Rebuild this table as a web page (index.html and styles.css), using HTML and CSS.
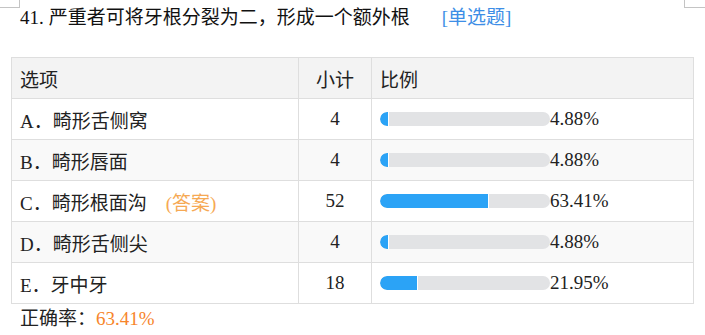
FILE: index.html
```html
<!DOCTYPE html>
<html lang="zh">
<head>
<meta charset="utf-8">
<link rel="stylesheet" href="styles.css">
</head>
<body>
<div class="corner corner-left"></div>
<div class="corner corner-right"></div>
<div class="page">
  <div class="title"><span class="num">41.</span>严重者可将牙根分裂为二，形成一个额外根<span class="qtype">[单选题]</span></div>
  <table class="stats">
    <thead>
      <tr><th class="c-opt">选项</th><th class="c-cnt">小计</th><th class="c-pct">比例</th></tr>
    </thead>
    <tbody>
      <tr><td class="c-opt">A．畸形舌侧窝</td><td class="c-cnt">4</td><td class="c-pct"><div class="pct"><div class="bar"><div class="fill" style="width:4.88%"></div></div><span>4.88%</span></div></td></tr>
      <tr class="alt"><td class="c-opt">B．畸形唇面</td><td class="c-cnt">4</td><td class="c-pct"><div class="pct"><div class="bar"><div class="fill" style="width:4.88%"></div></div><span>4.88%</span></div></td></tr>
      <tr><td class="c-opt">C．畸形根面沟<span class="answer">(答案)</span></td><td class="c-cnt">52</td><td class="c-pct"><div class="pct"><div class="bar"><div class="fill" style="width:63.41%"></div></div><span>63.41%</span></div></td></tr>
      <tr class="alt"><td class="c-opt">D．畸形舌侧尖</td><td class="c-cnt">4</td><td class="c-pct"><div class="pct"><div class="bar"><div class="fill" style="width:4.88%"></div></div><span>4.88%</span></div></td></tr>
      <tr><td class="c-opt">E．牙中牙</td><td class="c-cnt">18</td><td class="c-pct"><div class="pct"><div class="bar"><div class="fill" style="width:21.95%"></div></div><span>21.95%</span></div></td></tr>
    </tbody>
  </table>
  <div class="rate">正确率：<span class="rate-val">63.41%</span></div>
</div>
</body>
</html>
```

FILE: styles.css
```css
html, body {
  margin: 0;
  padding: 0;
  background: #fff;
}
body {
  font-family: "Liberation Serif", "Noto Sans CJK SC", serif;
  font-size: 19px;
  color: #222;
  position: relative;
  width: 705px;
  height: 335px;
  overflow: hidden;
}
.corner {
  position: absolute;
  top: 0;
  width: 19px;
  height: 7px;
  border-bottom: 1px solid #c4c4c4;
}
.corner-left {
  left: 0;
  border-right: 1px solid #c4c4c4;
}
.corner-right {
  left: 684px;
  width: 21px;
  border-left: 1px solid #c4c4c4;
}
.page {
  padding-left: 11px;
}
.title {
  padding-left: 9px;
  height: 36px;
  line-height: 36px;
  margin-bottom: 21px;
  color: #111;
}
.num {
  margin-right: 5px;
}
.qtype {
  color: #3d8ee6;
  margin-left: 32px;
}
.stats {
  border-collapse: collapse;
  width: 682px;
  table-layout: fixed;
  color: #222;
}
.stats th, .stats td {
  border: 1px solid #dedede;
  height: 41px;
  padding: 0 0 0 8px;
  font-weight: normal;
  text-align: left;
  vertical-align: middle;
  box-sizing: border-box;
}
.stats thead th {
  background: #f3f3f3;
}
.stats tr.alt td {
  background: #f9f9f9;
}
.stats .c-opt { width: 287px; }
.stats .c-cnt { width: 73px; text-align: center; padding: 0; }
.stats .c-pct { width: 322px; }
.stats th.c-cnt { text-align: center; }
.answer {
  color: #f6a954;
  margin-left: 19px;
}
.pct {
  display: flex;
  align-items: center;
}
.bar {
  width: 170px;
  height: 14px;
  border-radius: 7px;
  background: #e2e3e5;
  overflow: hidden;
  display: flex;
}
.fill {
  height: 100%;
  background: #2ba3f6;
  border-right: 1px solid #fff;
  border-radius: 7px 0 0 7px;
}
.rate {
  padding-left: 9px;
  height: 30px;
  line-height: 30px;
  color: #222;
}
.rate-val {
  color: #f7852b;
}
```
